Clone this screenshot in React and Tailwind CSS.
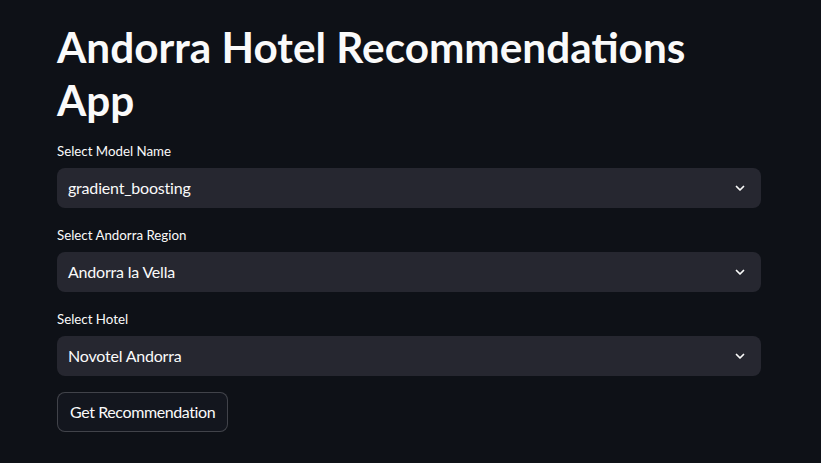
import { useState } from "react";

function Chevron() {
  return (
    <svg width="12" height="12" viewBox="0 0 24 24" fill="none" stroke="#fafafa" strokeWidth="3.5" strokeLinecap="round" strokeLinejoin="round">
      <polyline points="5 9 12 16 19 9" />
    </svg>
  );
}

function SelectBox({ label, value }) {
  return (
    <div className="flex flex-col">
      <label className="h-6 mb-1 flex items-center text-[13.3px] text-[#fafafa]">{label}</label>
      <div className="h-10 rounded-lg bg-[#262730] flex items-center justify-between pl-[11px] pr-[15px] text-[16px] tracking-[-0.2px] text-[#fafafa] cursor-pointer">
        <span>{value}</span>
        <Chevron />
      </div>
    </div>
  );
}

export default function App() {
  const [model] = useState("gradient_boosting");
  const [region] = useState("Andorra la Vella");
  const [hotel] = useState("Novotel Andorra");

  return (
    <div
      className="min-h-[463px] w-full bg-[#0e1117] text-[#fafafa]"
      style={{ fontFamily: "Lato, 'Noto Sans', sans-serif" }}
    >
      <div className="w-[704px] ml-[57px] pt-[20px] flex flex-col">
        <h1 className="text-[42.3px] font-bold leading-[53px] mb-[14px]">
          Andorra Hotel Recommendations App
        </h1>
        <div className="flex flex-col gap-4">
          <SelectBox label="Select Model Name" value={model} />
          <SelectBox label="Select Andorra Region" value={region} />
          <SelectBox label="Select Hotel" value={hotel} />
          <div>
            <button className="h-10 px-3 rounded-lg border border-[#fafafa]/20 bg-[#13161e] text-[16px] tracking-[-0.4px] text-[#fafafa]">
              Get Recommendation
            </button>
          </div>
        </div>
      </div>
    </div>
  );
}
